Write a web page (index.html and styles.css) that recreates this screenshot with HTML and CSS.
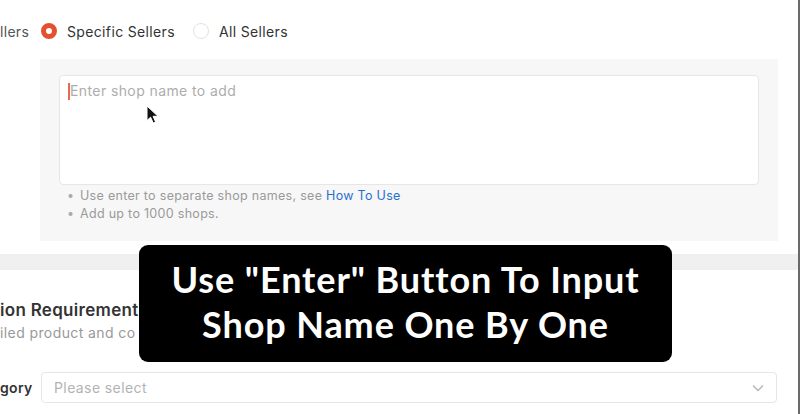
FILE: index.html
```html
<!DOCTYPE html>
<html lang="en">
<head>
<meta charset="utf-8">
<title>Sellers</title>
<link rel="stylesheet" href="styles.css">
</head>
<body>
<div class="page">
  <div class="seller-row">
    <span class="row-label">llers</span>
    <span class="radio radio-on"></span>
    <span class="radio-text">Specific Sellers</span>
    <span class="radio radio-off"></span>
    <span class="radio-text">All Sellers</span>
  </div>

  <div class="panel">
    <div class="textarea"><span class="caret"></span><span class="placeholder">Enter shop name to add</span></div>
    <ul class="hints">
      <li>Use enter to separate shop names, see <a class="link">How To Use</a></li>
      <li>Add up to 1000 shops.</li>
    </ul>
  </div>

  <div class="divider"></div>

  <h2 class="section-title">ion Requirement</h2>
  <p class="section-sub">iled product and co</p>

  <div class="field-row">
    <span class="row-label strong">gory</span>
    <div class="select">
      <span class="select-placeholder">Please select</span>
      <svg class="chevron" width="12" height="8" viewBox="0 0 12 8"><path d="M1 1.5 L6 6.5 L11 1.5" fill="none" stroke="#b5b5b5" stroke-width="1.3"/></svg>
    </div>
  </div>

  <div class="caption">
    <div>Use "Enter" Button To Input</div>
    <div>Shop Name One By One</div>
  </div>

  <svg class="pointer" width="14" height="20" viewBox="0 0 14 20"><path d="M1 1 L1 15.5 L4.6 12.2 L7.2 18 L9.6 17 L7.1 11.3 L12 11.3 Z" fill="#111" stroke="#fff" stroke-width="1"/></svg>
</div>
</body>
</html>
```

FILE: styles.css
```css
* { box-sizing: border-box; }

html, body {
  margin: 0;
  padding: 0;
  background: #fff;
}

body {
  font-family: Inter, "Noto Sans", sans-serif;
  color: #333;
  overflow: hidden;
}

.page {
  position: relative;
  width: 800px;
  height: 414px;
  overflow: hidden;
  border-right: 2px solid #6a6a6a;
}

.seller-row {
  display: flex;
  align-items: center;
  height: 20px;
  margin-top: 21px;
  font-size: 14px;
  letter-spacing: 0.35px;
}

.row-label {
  width: 41px;
  color: #555;
  font-size: 14px;
  letter-spacing: 0.3px;
}

.row-label.strong {
  color: #333;
  font-weight: 600;
}

.radio {
  width: 16px;
  height: 16px;
  border-radius: 50%;
  flex: none;
}

.radio-on {
  border: 5px solid #e2522f;
  background: #fff;
}

.radio-off {
  border: 1px solid #e2e2e2;
  background: #fff;
  margin-left: 18px;
}

.radio-text {
  margin-left: 10px;
  color: #333;
}

.panel {
  margin: 18px 0 0 40px;
  width: 738px;
  height: 182px;
  background: #f7f7f7;
  padding: 16px 19px;
}

.textarea {
  width: 700px;
  height: 110px;
  background: #fff;
  border: 1px solid #e6e6e6;
  border-radius: 4px;
  padding: 5px 9px;
  font-size: 14px;
  line-height: 20px;
  letter-spacing: 0.4px;
  display: flex;
  align-items: flex-start;
}

.caret {
  display: inline-block;
  width: 2px;
  height: 17px;
  margin: 2px 0 0 -1px;
  background: #e46a55;
}

.placeholder {
  color: #adadad;
}

.hints {
  list-style: none;
  margin: 2px 0 0;
  padding: 0 0 0 8px;
  font-size: 12.5px;
  line-height: 18px;
  letter-spacing: 0.3px;
  color: #9a9a9a;
}

.hints li::before {
  content: "\2022";
  display: inline-block;
  width: 13px;
  color: #aaa;
}

.link {
  color: #2a6fd0;
}

.divider {
  margin-top: 13px;
  height: 16px;
  background: #f0f0f0;
}

.section-title,
.section-sub {
  white-space: nowrap;
}

.section-title {
  margin: 28px 0 0;
  font-size: 17px;
  line-height: 24px;
  font-weight: 600;
  letter-spacing: 0.3px;
  color: #333;
}

.section-sub {
  margin: 1px 0 0;
  font-size: 14px;
  line-height: 20px;
  letter-spacing: 0.4px;
  color: #999;
}

.field-row {
  display: flex;
  align-items: center;
  margin-top: 29px;
}

.select {
  width: 736px;
  height: 31px;
  border: 1px solid #e6e6e6;
  border-radius: 4px;
  display: flex;
  align-items: center;
  justify-content: space-between;
  padding: 0 12px 0 12px;
  font-size: 14px;
  letter-spacing: 0.4px;
}

.select-placeholder {
  color: #b3b3b3;
}

.caption {
  position: absolute;
  left: 139px;
  top: 245px;
  width: 533px;
  height: 117px;
  background: #000;
  border-radius: 9px;
  color: #fff;
  font-family: Lato, "Open Sans", sans-serif;
  font-weight: 700;
  font-size: 36px;
  line-height: 45px;
  letter-spacing: 0.9px;
  text-align: center;
  padding-top: 12px;
  white-space: nowrap;
}

.pointer {
  position: absolute;
  left: 146px;
  top: 105px;
}
```
